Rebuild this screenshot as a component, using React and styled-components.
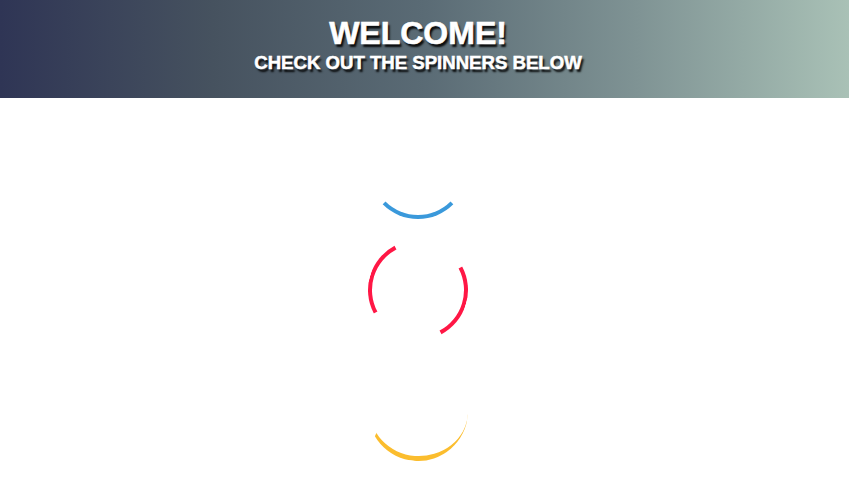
import React from 'react';
import styled, { createGlobalStyle, css } from 'styled-components';

const GlobalStyle = createGlobalStyle`
  html, body {
    margin: 0;
    padding: 0;
    background: #fff;
    font-family: "Liberation Sans", Arial, Helvetica, sans-serif;
  }
`;

const spinners = [
  { kind: 'bottom', color: '#3a99db', angle: 0 },
  { kind: 'sides', color: '#ff1745', angle: 17 },
  { kind: 'sweep', color: '#fbbd2e', angle: 4 },
];

export default function App() {
  return (
    <>
      <GlobalStyle />
      <Header>
        <Title>WELCOME!</Title>
        <Subtitle>CHECK OUT THE SPINNERS BELOW</Subtitle>
      </Header>
      <SpinnerList>
        {spinners.map((s, idx) => (
          <Spinner key={idx} $kind={s.kind} $color={s.color} style={{ transform: `rotate(${s.angle}deg)` }} />
        ))}
      </SpinnerList>
    </>
  );
}

const Header = styled.header`
  height: 98px;
  box-sizing: border-box;
  padding: 15px 13px 0 0;
  background: linear-gradient(
    to right,
    #2f3555 0%,
    #46525f 25%,
    #5a6b75 50%,
    #7f9394 75%,
    #a9c1b6 100%
  );
  text-align: center;
  color: #fff;
`;

const Title = styled.h1`
  margin: 0;
  font-size: 32px;
  font-weight: 700;
  line-height: 37px;
  -webkit-text-stroke: 0.6px #fff;
  text-shadow: 2px 3px 2px rgba(0, 0, 0, 0.9);
`;

const Subtitle = styled.h2`
  margin: 0;
  font-size: 18.6px;
  font-weight: 700;
  line-height: 22px;
  -webkit-text-stroke: 0.5px #fff;
  text-shadow: 2px 3px 2px rgba(0, 0, 0, 0.9);
`;

const SpinnerList = styled.main`
  display: flex;
  flex-direction: column;
  align-items: center;
  gap: 21px;
  padding: 21px 13px 0 0;
`;

const kinds = {
  bottom: css`
    border-bottom-color: ${(p) => p.$color};
  `,
  sides: css`
    border-left-color: ${(p) => p.$color};
    border-right-color: ${(p) => p.$color};
  `,
  sweep: css`
    border-bottom-color: ${(p) => p.$color};
    border-bottom-width: 5px;
    border-right-width: 0;
    border-left-width: 2px;
  `,
};

const Spinner = styled.div`
  width: 100px;
  height: 100px;
  box-sizing: border-box;
  border-radius: 50%;
  border: 4px solid transparent;
  ${(p) => kinds[p.$kind]}
`;
